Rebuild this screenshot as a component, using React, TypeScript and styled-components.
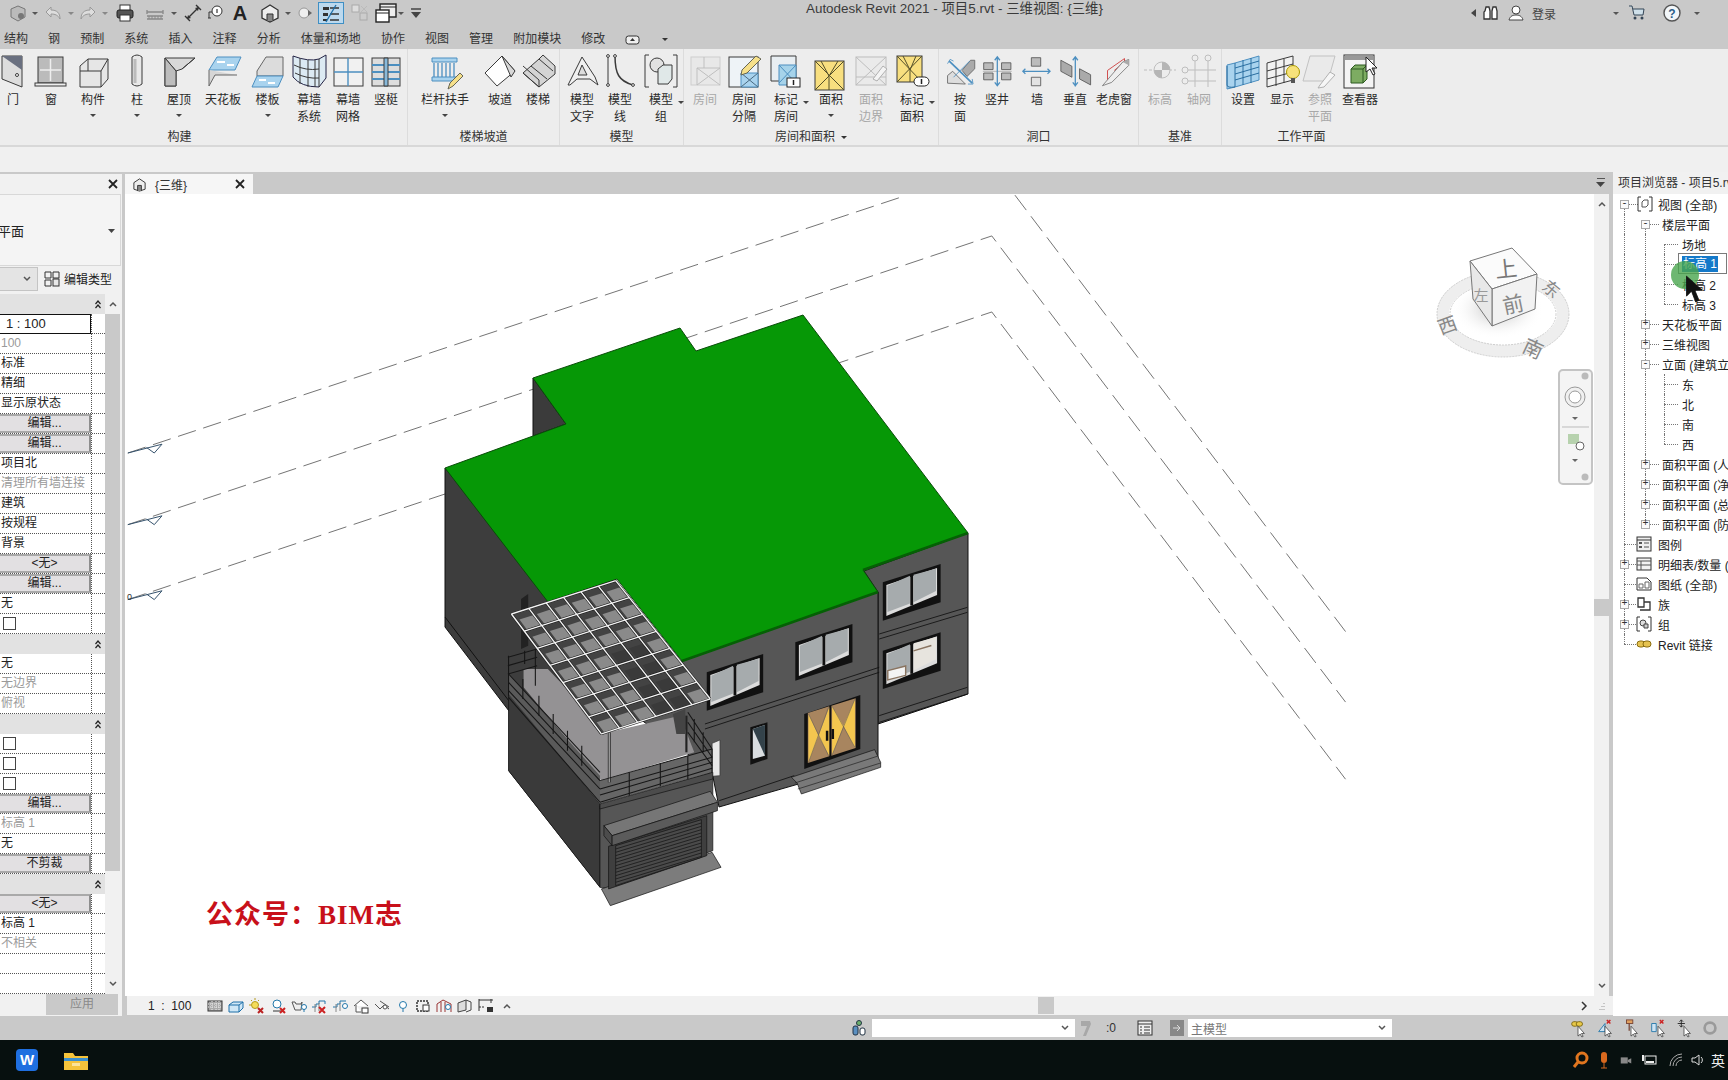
import React from "react";
import styled, { createGlobalStyle } from "styled-components";

const Global = createGlobalStyle`
  html, body { margin: 0; padding: 0; width: 1728px; height: 1080px; overflow: hidden; background: #c9c9c9; }
  * { box-sizing: border-box; }
  body { font-family: "Liberation Sans", "Noto Sans CJK SC", sans-serif; font-size: 12px; color: #222; }
`;

const Page = styled.div`width:1728px;height:1080px;display:flex;flex-direction:column;overflow:hidden;`;
const TitleBar = styled.div`height:28px;background:#c9c9c9;position:relative;display:flex;align-items:flex-start;padding-left:6px;`;
const TitleText = styled.div`position:absolute;left:806px;top:0;font-size:13.4px;line-height:18px;color:#3a3a3a;white-space:nowrap;`;
const Qat = styled.div`display:flex;align-items:center;height:26px;`;
const Slot = styled.div<{ $w: number; $on?: boolean }>`
  width:${p => p.$w}px;height:22px;display:flex;align-items:center;justify-content:center;
  ${p => p.$on ? "background:#bcd9ee;outline:1px solid #3f8fc4;outline-offset:-1px;" : ""}
`;
const TinyArrow = styled.span<{ $c?: string }>`width:0;height:0;border-left:3px solid transparent;border-right:3px solid transparent;border-top:3px solid ${p => p.$c || "#555"};display:inline-block;`;
const UserArea = styled.div`position:absolute;left:1470px;top:1px;height:24px;display:flex;align-items:center;`;
const LoginText = styled.span`font-size:12px;color:#444;width:82px;padding-left:4px;`;
const TabsBar = styled.div`height:21px;background:#c9c9c9;display:flex;align-items:center;gap:20.1px;padding:2px 0 0 4px;font-size:12px;color:#333;`;
const TabLabel = styled.span`white-space:nowrap;line-height:19px;`;
const Ribbon = styled.div`height:98px;background:#ededed;border-bottom:2px solid #d8d8d8;display:flex;`;
const Panel = styled.div<{ $w: number; $ml?: number; $last?: boolean }>`
  width:${p => p.$w}px;flex:none;margin-left:${p => p.$ml || 0}px;display:flex;flex-direction:column;
  ${p => p.$last ? "" : "border-right:1px solid #dcdcdc;"}
`;
const ToolRow = styled.div<{ $pl: number }>`height:80px;display:flex;padding-left:${p => p.$pl}px;`;
const Tool = styled.div<{ $w: number; $dim?: boolean }>`
  width:${p => p.$w}px;flex:none;display:flex;flex-direction:column;align-items:center;padding-top:4px;font-size:12px;line-height:17px;
  color:${p => p.$dim ? "#a8a8a8" : "#2a2a2a"};text-align:center;position:relative;
`;
const ToolIcon = styled.svg`width:36px;height:36px;flex:none;margin-bottom:3px;overflow:visible;`;
const ToolText = styled.div`white-space:pre-line;`;
const ToolArrow = styled.span`display:block;width:0;height:0;margin-top:5px;border-left:3px solid transparent;border-right:3px solid transparent;border-top:3px solid #444;`;
const SideArrow = styled(ToolArrow)`position:absolute;right:0;top:52px;margin:0;`;
const PanelTitle = styled.div`height:16px;line-height:16px;text-align:center;font-size:12px;color:#333;display:flex;align-items:center;justify-content:center;gap:6px;`;
const Band = styled.div`height:25px;background:#f0f0f0;`;

const Work = styled.div`flex:1;display:flex;background:#c9c9c9;min-height:0;`;
const Props = styled.div`width:122px;margin-top:2px;background:#f1f1f1;display:flex;flex-direction:column;flex:none;`;
const PropHead = styled.div`height:20px;display:flex;justify-content:flex-end;align-items:center;padding-right:3px;`;
const TypeBox = styled.div`height:72px;margin-right:1px;background:#f4f4f4;border-top:1px solid #d8d8d8;border-bottom:1px solid #d8d8d8;border-right:1px solid #d8d8d8;display:flex;align-items:center;justify-content:space-between;overflow:hidden;padding-right:4px;`;
const TypeName = styled.span`margin-left:-28px;font-size:13px;white-space:nowrap;`;
const ComboRow = styled.div`height:28px;display:flex;align-items:center;padding-bottom:3px;`;
const MiniCombo = styled.div`width:38px;height:24px;background:#e4e4e4;border:1px solid #c4c4c4;border-left:0;display:flex;align-items:center;justify-content:flex-end;padding-right:5px;`;
const EditType = styled.div`display:flex;align-items:center;gap:4px;margin-left:6px;font-size:12px;white-space:nowrap;`;
const TableWrap = styled.div`height:700px;display:flex;`;
const Table = styled.div`width:105px;background:#fff;flex:none;`;
const Row = styled.div<{ $head?: boolean }>`
  height:20px;display:grid;grid-template-columns:91px 14px;
  ${p => p.$head ? "background:#e2e2e2;" : "border-bottom:1px dotted #555;"}
`;
const Val = styled.div<{ $gray?: boolean }>`
  font-size:12px;line-height:19px;padding-left:1px;white-space:nowrap;overflow:hidden;color:${p => p.$gray ? "#9a9a9a" : "#222"};
`;
const InputVal = styled.div`height:20px;border:1px solid #111;background:#fff;border-left:0;font-size:13px;line-height:18px;padding-left:6px;color:#222;`;
const Btn = styled.div`height:19px;background:#e2e0e2;border:2px solid #a9a9a9;border-left:0;border-right-color:#8e8e8e;text-align:center;line-height:15px;font-size:12px;color:#222;`;
const Chk = styled.div`width:13px;height:13px;margin:3px 0 0 2px;border:1px solid #444;background:#fff;`;
const Tail = styled.div<{ $head?: boolean }>`${p => p.$head ? "" : "border-left:1px dotted #555;"}display:flex;align-items:center;justify-content:center;`;
const Scroll = styled.div`width:15px;margin-left:0;display:flex;flex-direction:column;background:#f1f1f1;flex:none;`;
const ScrollBtn = styled.div`height:20px;display:flex;align-items:center;justify-content:center;flex:none;`;
const ScrollThumb = styled.div<{ $h: number }>`height:${p => p.$h}px;background:#c9c9c9;flex:none;`;
const ScrollRest = styled.div`flex:1;`;
const ApplyRow = styled.div`flex:1;display:flex;justify-content:flex-end;padding:0 4px 0 0;`;
const ApplyBtn = styled.div`width:72px;height:21px;background:#c9c9c9;color:#8a8a8a;text-align:center;line-height:20px;font-size:12px;`;

const Center = styled.div`width:1488px;margin-left:3px;flex:none;display:flex;flex-direction:column;`;
const DocStrip = styled.div`height:22px;display:flex;justify-content:space-between;align-items:flex-end;padding-right:8px;`;
const DocTab = styled.div`width:128px;height:20px;background:#f6f6f6;display:flex;align-items:center;padding:0 7px;gap:8px;font-size:12px;color:#333;`;
const DocTitle = styled.span`flex:1;`;
const StripMenu = styled.div`height:22px;display:flex;flex-direction:column;justify-content:center;align-items:center;gap:1px;`;
const MenuBar = styled.span`width:8px;height:1px;background:#555;`;
const ViewRow = styled.div`height:802px;display:flex;`;
const Canvas = styled.div`width:1469px;flex:none;background:#fff;position:relative;overflow:hidden;`;
const Scene = styled.svg`display:block;width:1469px;height:802px;`;
const Watermark = styled.div`position:absolute;left:81px;top:705px;font-family:"Liberation Serif","Noto Sans CJK SC",serif;font-weight:700;font-size:27px;line-height:32px;color:#c8101a;letter-spacing:1px;white-space:nowrap;`;
const Cube = styled.svg`position:absolute;left:1295px;top:25px;width:180px;height:150px;`;
const NavBar = styled.div`position:absolute;left:1433px;top:175px;width:35px;height:116px;border:2px solid #c4c4c4;border-radius:5px;background:#f4f4f4;`;
const NavSvg = styled.svg`display:block;width:31px;height:112px;`;
const VScroll = styled.div`width:15px;background:#f1f1f1;display:flex;flex-direction:column;flex:none;`;
const VTrack = styled.div`flex:1;display:flex;flex-direction:column;align-items:stretch;padding-top:385px;`;
const VThumb = styled.div`height:17px;background:#c9c9c9;`;
const ViewBar = styled.div`height:19px;background:#f1f1f1;margin-left:2px;display:flex;align-items:center;position:relative;`;
const Scale = styled.div`width:78px;padding-left:21px;font-size:12px;color:#222;white-space:pre;flex:none;`;
const BarIcons = styled.div`display:flex;align-items:center;width:326px;flex:none;`;
const BarSlot = styled.div`width:20.8px;height:19px;display:flex;align-items:center;justify-content:center;flex:none;`;
const HThumb = styled.div`position:absolute;left:911px;top:1px;width:16px;height:17px;background:#c9c9c9;`;
const HRight = styled.div`position:absolute;left:1452px;top:0;height:19px;display:flex;align-items:center;gap:9px;`;

const Browser = styled.div`flex:1;background:#fff;display:flex;flex-direction:column;overflow:hidden;position:relative;`;
const BrowserHead = styled.div`height:22px;background:#f1f1f1;font-size:12px;line-height:22px;padding-left:5px;white-space:nowrap;overflow:hidden;color:#333;`;
const TreeRow = styled.div<{ $x: number }>`height:20px;position:relative;display:flex;align-items:center;padding-left:${p => p.$x}px;font-size:12px;white-space:nowrap;color:#222;flex:none;`;
const Guide = styled.span<{ $x: number; $half?: boolean; $low?: boolean }>`
  position:absolute;left:${p => p.$x}px;top:${p => p.$low ? "10px" : "0"};height:${p => p.$half || p.$low ? "10px" : "20px"};border-left:1px dotted #777;
`;
const Elbow = styled.span<{ $x: number; $w: number }>`position:absolute;left:${p => p.$x}px;top:10px;width:${p => p.$w}px;border-top:1px dotted #777;`;
const Expander = styled.span<{ $x: number }>`
  position:absolute;left:${p => p.$x - 4}px;top:6px;width:9px;height:9px;border:1px solid #aaa;background:#fafafa;
  font-size:10px;line-height:6px;text-align:center;color:#333;font-family:"Liberation Mono",monospace;z-index:1;
`;
const TreeIcon = styled.svg<{ $x: number }>`position:absolute;left:${p => p.$x}px;top:2px;width:16px;height:16px;z-index:1;`;
const EditBox = styled.div`position:absolute;left:65px;top:-1px;width:49px;height:21px;border:1px solid #7a7a7a;background:#fff;padding:2px 0 0 3px;z-index:2;`;
const EditSel = styled.span`display:inline-block;background:#1479c9;color:#fff;font-size:12px;line-height:16px;padding:0 1px;`;
const MouseDot = styled.div`position:absolute;left:58px;top:89px;width:28px;height:28px;border-radius:50%;background:rgba(72,165,78,.8);z-index:3;`;
const Pointer = styled.svg`position:absolute;left:71px;top:103px;width:20px;height:29px;z-index:4;`;
const RibbonCursor = styled.svg`position:absolute;left:1365px;top:56px;width:12px;height:20px;z-index:4;`;

const Status = styled.div`height:24px;background:#c9c9c9;position:relative;display:flex;align-items:center;padding-left:846px;flex:none;overflow:hidden;`;
const Field = styled.div<{ $w: number }>`width:${p => p.$w}px;height:18px;background:#fff;display:flex;align-items:center;justify-content:space-between;padding:0 5px 0 3px;font-size:12px;color:#777;flex:none;`;
const StatusSlot = styled.div<{ $w: number }>`width:${p => p.$w}px;height:20px;display:flex;align-items:center;justify-content:center;font-size:12px;color:#333;flex:none;`;
const SelectTools = styled.div`margin-left:173px;display:flex;align-items:center;flex:none;`;
const Taskbar = styled.div`height:40px;background:#07100f;display:flex;align-items:center;padding-left:16px;position:relative;flex:none;`;
const WpsIcon = styled.div`width:22px;height:22px;border-radius:4px;background:#1f6fe0;color:#fff;font-weight:700;font-size:15px;line-height:22px;text-align:center;`;
const Folder = styled.svg`width:26px;height:22px;margin-left:25px;`;
const Tray = styled.div`position:absolute;left:1570px;top:0;height:40px;display:flex;align-items:center;width:158px;overflow:hidden;`;
const TraySlot = styled.div<{ $w: number }>`width:${p => p.$w}px;flex:none;display:flex;justify-content:center;color:#eee;font-size:14px;`;
const SmallSvg = styled.svg<{ $s?: number }>`width:${p => p.$s || 18}px;height:${p => p.$s || 18}px;display:block;overflow:visible;flex:none;`;
const A = styled.span`font-size:20px;font-weight:700;color:#222;line-height:22px;`;

const k = "#3a3a3a";
const b1 = "#4c8fc0";
const b2 = "#a9d3ee";
const y1 = "#f6e08a";

const icons: Record<string, React.ReactNode> = {
  door: <><path d="M7 3h20v31L7 26z" fill="#ddd" stroke={k} /><path d="M7 3h20v14z" fill="#6a7080" /><circle cx="22" cy="22" r="1.5" fill="#fff" stroke={k} /></>,
  window: <><rect x="5" y="4" width="25" height="26" fill="#bbb" stroke={k} /><path d="M17.5 6v22M7 17h21" stroke="#eee" strokeWidth="1.5" /><rect x="2" y="30" width="31" height="3" fill="#eee" stroke={k} /></>,
  comp: <><path d="M5 13l8-7h20v20l-7 8H5z" fill="#e6e6e6" stroke={k} /><path d="M13 6v12H5M13 18l13 0v16M26 18l7-12" fill="none" stroke={k} /></>,
  column: <><path d="M13 4q5-4 10 0v27q-5 4-10 0z" fill="#e8e8e8" stroke={k} /><path d="M16 6v24" stroke="#bbb" strokeWidth="3" /></>,
  roof: <><path d="M4 5h30L21 16l-6 2v15H4z" fill="#d9d9d9" stroke={k} /><path d="M4 5l11 13M34 5L21 16" stroke={k} fill="none" /><path d="M4 5l11 13v15H4z" fill="#bdbdbd" stroke={k} /></>,
  ceil: <><path d="M12 4h24l-6 13H4z" fill={b2} stroke={b1} /><path d="M4 17v16l6-11h22" fill="#d6d6d6" stroke="#666" /><path d="M12 9h8M22 12h7" stroke="#fff" strokeWidth="2" /></>,
  floor: <><path d="M7 18l9-14h17v19H7z" fill="#dcdcdc" stroke="#666" /><path d="M7 23h26l-5 11H2z" fill={b2} stroke={b1} /><path d="M9 27h7M18 30h7" stroke="#fff" strokeWidth="2" /></>,
  curtain: <><path d="M2 3q16 6 26 3l7-4v23l-7 9q-18 0-26-10z" fill="#dceaf3" stroke="#224" /><path d="M9 5v26M17 7v27M24 7v27M3 12q12 6 25 4M4 20q12 6 24 5M28 6v28" stroke={k} fill="none" /></>,
  cgrid: <><rect x="4" y="5" width="29" height="28" fill="#f1f1f1" stroke={k} /><path d="M18 5v28M4 19h29" stroke={b1} strokeWidth="1.4" /></>,
  mullion: <><rect x="4" y="5" width="28" height="28" fill="#ddd" stroke={k} /><path d="M4 12h28M4 19h28M4 26h28" stroke={b1} strokeWidth="2" /><path d="M16 5h4v28h-4z" fill="#88b9da" stroke={k} /></>,
  railing: <><path d="M5 5h25v4H5z" fill={b2} stroke={b1} /><path d="M7 10v14M11 10v14M15 10v14M19 10v14M23 10v14M27 10v14" stroke={b1} strokeWidth="1.3" /><path d="M5 24h25v4H5z" fill={b2} stroke={b1} /><path d="M21 36l2-6 10-10 3 3-10 10z" fill={y1} stroke="#665" /></>,
  ramp: <><path d="M3 20L20 3l13 15-18 15z" fill="#fff" stroke={k} /><path d="M20 3l13 15-4 6z" fill="#d8d8d8" stroke={k} /></>,
  stair: <><path d="M3 20l8-7 8-7 4-4 12 11v8L19 34z" fill="#d4d4d4" stroke={k} /><path d="M3 20l16 14v-7L3 13M11 13l16 13M19 6l14 12" stroke={k} fill="none" /></>,
  mtext: <><path d="M4 32L18 4l13 20 3 8-8-6H13l-7 6z" fill="#f0f0f0" stroke={k} /><path d="M14 22l4-10 5 10z" fill="#ddd" stroke={k} /></>,
  mline: <><path d="M6 4v28" stroke={k} strokeWidth="1" /><path d="M13 3c0 18 4 25 18 29" stroke={k} strokeWidth="1.5" fill="none" /><circle cx="6" cy="3" r="1.4" fill="#fff" stroke={k} /><circle cx="6" cy="32" r="1.4" fill="#fff" stroke={k} /><circle cx="31" cy="32" r="1.4" fill="#fff" stroke={k} /><circle cx="13" cy="3" r="1.4" fill="#fff" stroke={k} /></>,
  mgroup: <><path d="M6 2H2v32h4M30 2h4v32h-4" stroke={k} fill="none" /><circle cx="14" cy="12" r="7" fill="#e2e2e2" stroke={k} /><path d="M15 16l5-4h9v14l-4 5H15z" fill="#e0e8e8" stroke={k} /></>,
  room0: <g opacity=".45"><rect x="4" y="4" width="29" height="28" fill="#e4e4e4" stroke="#aaa" /><path d="M10 15l23 17M33 15L10 32M10 15v17M10 15h23M17 4v11" stroke="#888" fill="none" /></g>,
  roomsep: <><rect x="3" y="4" width="29" height="30" fill="#eef3f7" stroke={k} /><path d="M15 20h17v14H15z" fill={b2} stroke={b1} /><path d="M15 20l17 14M32 20L15 34" stroke="#4a6a80" /><path d="M16 17L30 3l5 3-14 14-6 2z" fill={y1} stroke="#665" /></>,
  roomtag: <><path d="M3 3h25v25H3z" fill="#e8eef2" stroke={k} /><path d="M11 12h17v20H11z" fill="#a6d3ea" stroke={b1} /><path d="M11 12l17 18M28 12L11 30" stroke={b1} /><rect x="19" y="25" width="13" height="9" fill="#fff" stroke="#222" /><path d="M25.5 27v5" stroke="#222" strokeWidth="1.5" /></>,
  area: <><rect x="2" y="8" width="29" height="29" fill="#f8df7f" stroke={k} /><path d="M2 8l29 29M31 8L2 37M8 8l8 15 9-15M16 23v14" stroke="#54502a" fill="none" /></>,
  areab: <g opacity=".4"><rect x="3" y="4" width="30" height="28" fill="#e8e8e8" stroke="#777" /><path d="M3 4l30 28M33 4L3 32M3 24h30" stroke="#777" /><path d="M20 26l10-13 4 3-10 12z" fill="#fff" stroke="#555" /></g>,
  areatag: <><rect x="3" y="3" width="25" height="26" fill="#f8df7f" stroke={k} /><path d="M3 3l25 26M28 3L3 29M9 3l7 14 6-14M16 17v12" stroke="#54502a" fill="none" /><rect x="20" y="24" width="15" height="9" rx="4.5" fill="#fff" stroke="#222" /><path d="M27.5 26v5" stroke="#222" strokeWidth="1.5" /></>,
  byface: <g transform="translate(3 3) scale(.85)"><path d="M3 32V23l6-5 15 15z" fill="#ddd" stroke="#666" /><path d="M20 17l10-12 5 0v10l-9 9z" fill="#aaa" stroke="#666" /><path d="M5 6l27 26" stroke={b1} strokeWidth="2" /><path d="M3 9l3-5 4 2M27 33l6 0-1-6M10 25l19-19" stroke={b1} fill="none" /></g>,
  shaft: <g transform="translate(3 3) scale(.85)"><path d="M2 8h11v8H2zM23 8h11v8H23zM2 20h11v8H2zM23 20h11v8H23z" fill="#bbb" stroke="#555" /><path d="M1 18h34" stroke="#aaa" /><path d="M18 2v32M15 5l3-4 3 4M15 31l3 4 3-4" stroke={b1} strokeWidth="1.5" fill="none" /></g>,
  wallop: <g transform="translate(3 3) scale(.85)"><path d="M11 2h11v10H11z" fill="#bbb" stroke="#555" /><path d="M11 25h11v10H11z" fill="#e2e2e2" stroke="#555" /><path d="M1 18h32M4 15l-3 3 3 3M30 15l3 3-3 3" stroke={b1} strokeWidth="1.5" fill="none" /></g>,
  vert: <g transform="translate(3 3) scale(.85)"><path d="M1 5l13 7v13L1 18zM23 15l13 7v12l-13-7z" fill="#aaa" stroke="#555" /><path d="M18 1v35M15 5l3-4 3 4M15 31l3 4 3-4" stroke={b1} strokeWidth="1.5" fill="none" /></g>,
  dormer: <g transform="translate(3 3) scale(.85)"><path d="M10 32V17L30 3v4L18 17" fill="none" stroke="#c33" /><path d="M4 35l24-28 7-3v7L15 31z" fill="#eee" stroke="#777" /><path d="M28 7l7-3v7z" fill="#aaa" /></g>,
  level: <g opacity=".55"><path d="M2 17h32" stroke="#999" strokeDasharray="3 2" /><circle cx="20" cy="17" r="8" fill="#eee" stroke="#999" /><path d="M20 9a8 8 0 0 1 8 8h-8zM20 25a8 8 0 0 1-8-8h8z" fill="#888" /></g>,
  grid: <g opacity=".55" fill="none" stroke="#999"><circle cx="14" cy="5" r="3" /><circle cx="27" cy="5" r="3" /><circle cx="4" cy="17" r="3" /><circle cx="4" cy="28" r="3" /><path d="M14 8v26M27 8v26M7 17h28M7 28h28" /></g>,
  set: <><path d="M2 12l8-2 24-7v24l-24 7-8 2z" fill={b2} stroke={b1} /><path d="M2 13v19q0 3 8 2V10M18 7v25M26 5v25M10 15l24-7M10 21l24-7M10 27l24-7" stroke="#2a6ea0" fill="none" /></>,
  show: <><path d="M3 10l26-7v24L3 34z" fill="#f2f2f2" stroke={k} /><path d="M12 8v25M20 6v24M3 18l26-7M3 26l26-7" stroke={k} /><circle cx="29" cy="19" r="6.5" fill="#f7e27b" stroke="#a90" /><rect x="27" y="25" width="4" height="5" fill="#555" /></>,
  refp: <g opacity=".5"><path d="M8 3h25l-7 25H1z" fill="#e8e8e8" stroke="#999" /><path d="M18 32l10-13 5 3-11 12-6 1z" fill="#fff" stroke="#777" /></g>,
  viewer: <><rect x="2" y="2" width="30" height="33" fill="#f4f4f4" stroke="#333" /><rect x="3" y="3" width="28" height="4" fill="#999" /><path d="M9 16l4-4h12v14l-4 4H9z" fill="#7dac62" stroke="#2d5a20" /><path d="M9 16h12v14M21 16l4-4" stroke="#2d5a20" fill="none" /></>,
};

type T = { i: string; t: string; w: number; dim?: boolean; arrow?: boolean; side?: boolean };
const panels: { w: number; ml?: number; pl: number; title: string; more?: boolean; last?: boolean; tools: T[] }[] = [
  { w: 456, ml: -48, pl: 42, title: "构建", tools: [
    { i: "door", t: "门", w: 38 }, { i: "window", t: "窗", w: 38 }, { i: "comp", t: "构件", w: 46, arrow: true }, { i: "column", t: "柱", w: 42, arrow: true },
    { i: "roof", t: "屋顶", w: 42, arrow: true }, { i: "ceil", t: "天花板", w: 46 }, { i: "floor", t: "楼板", w: 43, arrow: true },
    { i: "curtain", t: "幕墙\n系统", w: 40 }, { i: "cgrid", t: "幕墙\n网格", w: 38 }, { i: "mullion", t: "竖梃", w: 38 } ] },
  { w: 152, pl: 2, title: "楼梯坡道", tools: [ { i: "railing", t: "栏杆扶手", w: 70, arrow: true }, { i: "ramp", t: "坡道", w: 40 }, { i: "stair", t: "楼梯", w: 36 } ] },
  { w: 124, pl: 2, title: "模型", tools: [ { i: "mtext", t: "模型\n文字", w: 40 }, { i: "mline", t: "模型\n线", w: 36 }, { i: "mgroup", t: "模型\n组", w: 46, side: true } ] },
  { w: 255, pl: 1, title: "房间和面积", more: true, tools: [
    { i: "room0", t: "房间", w: 40, dim: true }, { i: "roomsep", t: "房间\n分隔", w: 38 }, { i: "roomtag", t: "标记\n房间", w: 46, side: true },
    { i: "area", t: "面积", w: 44, arrow: true }, { i: "areab", t: "面积\n边界", w: 36, dim: true }, { i: "areatag", t: "标记\n面积", w: 46, side: true } ] },
  { w: 200, pl: 2, title: "洞口", tools: [ { i: "byface", t: "按\n面", w: 38 }, { i: "shaft", t: "竖井", w: 36 }, { i: "wallop", t: "墙", w: 44 }, { i: "vert", t: "垂直", w: 32 }, { i: "dormer", t: "老虎窗", w: 46 } ] },
  { w: 83, pl: 1, title: "基准", tools: [ { i: "level", t: "标高", w: 40, dim: true }, { i: "grid", t: "轴网", w: 38, dim: true } ] },
  { w: 159, pl: 1, title: "工作平面", last: true, tools: [ { i: "set", t: "设置", w: 40 }, { i: "show", t: "显示", w: 38 }, { i: "refp", t: "参照\n平面", w: 38, dim: true }, { i: "viewer", t: "查看器", w: 42 } ] },
];

const tabs = ["结构", "钢", "预制", "系统", "插入", "注释", "分析", "体量和场地", "协作", "视图", "管理", "附加模块", "修改"];

const Chev = ({ up = true }: { up?: boolean }) => (
  <SmallSvg $s={10} viewBox="0 0 10 10"><path d={up ? "M2 7l3-3 3 3" : "M2 3l3 3 3-3"} fill="none" stroke="#555" strokeWidth="1.5" /></SmallSvg>
);
const Dbl = () => (
  <SmallSvg $s={10} viewBox="0 0 10 10"><path d="M2.5 5l2.5-3 2.5 3M2.5 9l2.5-3 2.5 3" fill="none" stroke="#222" strokeWidth="1.2" /></SmallSvg>
);

type P = { kind: string; t?: string };
const propRows: P[] = [
  { kind: "head" }, { kind: "input", t: "1 : 100" }, { kind: "gray", t: "100" }, { kind: "text", t: "标准" }, { kind: "text", t: "精细" }, { kind: "text", t: "显示原状态" },
  { kind: "btn", t: "编辑..." }, { kind: "btn", t: "编辑..." }, { kind: "text", t: "项目北" }, { kind: "gray", t: "清理所有墙连接" }, { kind: "text", t: "建筑" }, { kind: "text", t: "按规程" },
  { kind: "text", t: "背景" }, { kind: "btn", t: "<无>" }, { kind: "btn", t: "编辑..." }, { kind: "text", t: "无" }, { kind: "check" }, { kind: "head" },
  { kind: "text", t: "无" }, { kind: "gray", t: "无边界" }, { kind: "gray", t: "俯视" }, { kind: "head" }, { kind: "check" }, { kind: "check" }, { kind: "check" },
  { kind: "btn", t: "编辑..." }, { kind: "gray", t: "标高 1" }, { kind: "text", t: "无" }, { kind: "btn", t: "不剪裁" }, { kind: "head" },
  { kind: "btn", t: "<无>" }, { kind: "text", t: "标高 1" }, { kind: "gray", t: "不相关" }, { kind: "empty" }, { kind: "empty" },
];

const L0 = 11, L1 = 32, L2 = 51;
type TN = { t: string; x: number; exp?: "+" | "-"; ex?: number; ic?: string; ix?: number; g?: number[]; half?: number[]; low?: number[]; el?: [number, number]; edit?: boolean };
const tree: TN[] = [
  { t: "视图 (全部)", x: 45, exp: "-", ex: L0, ic: "view", ix: 24, low: [L0], el: [L0, 14] },
  { t: "楼层平面", x: 49, exp: "-", ex: L1, g: [L0], low: [L1], el: [L1, 14] },
  { t: "场地", x: 69, g: [L0, L1], low: [L2], el: [L2, 14] },
  { t: "", x: 69, g: [L0, L1, L2], el: [L2, 14], edit: true },
  { t: "标高 2", x: 69, g: [L0, L1, L2], el: [L2, 14] },
  { t: "标高 3", x: 69, g: [L0, L1], half: [L2], el: [L2, 14] },
  { t: "天花板平面", x: 49, exp: "+", ex: L1, g: [L0, L1], el: [L1, 14] },
  { t: "三维视图", x: 49, exp: "+", ex: L1, g: [L0, L1], el: [L1, 14] },
  { t: "立面 (建筑立面)", x: 49, exp: "-", ex: L1, g: [L0, L1], el: [L1, 14] },
  { t: "东", x: 69, g: [L0, L1, L2], el: [L2, 14] },
  { t: "北", x: 69, g: [L0, L1, L2], el: [L2, 14] },
  { t: "南", x: 69, g: [L0, L1, L2], el: [L2, 14] },
  { t: "西", x: 69, g: [L0, L1], half: [L2], el: [L2, 14] },
  { t: "面积平面 (人防分区面积)", x: 49, exp: "+", ex: L1, g: [L0, L1], el: [L1, 14] },
  { t: "面积平面 (净面积)", x: 49, exp: "+", ex: L1, g: [L0, L1], el: [L1, 14] },
  { t: "面积平面 (总建筑面积)", x: 49, exp: "+", ex: L1, g: [L0, L1], el: [L1, 14] },
  { t: "面积平面 (防火分区面积)", x: 49, exp: "+", ex: L1, g: [L0], half: [L1], el: [L1, 14] },
  { t: "图例", x: 45, ic: "legend", ix: 23, g: [L0], el: [L0, 12] },
  { t: "明细表/数量 (全部)", x: 45, exp: "+", ex: L0, ic: "sched", ix: 23, g: [L0], el: [L0, 12] },
  { t: "图纸 (全部)", x: 45, ic: "sheet", ix: 23, g: [L0], el: [L0, 12] },
  { t: "族", x: 45, exp: "+", ex: L0, ic: "fam", ix: 23, g: [L0], el: [L0, 12] },
  { t: "组", x: 45, exp: "+", ex: L0, ic: "grp", ix: 23, g: [L0], el: [L0, 12] },
  { t: "Revit 链接", x: 45, ic: "link", ix: 23, half: [L0], el: [L0, 12] },
];
const treeIcons: Record<string, React.ReactNode> = {
  view: <><path d="M4 1H1v14h3M12 1h3v14h-3" fill="none" stroke="#333" /><path d="M5 6l2-2h4v5l-2 2H5z" fill="#fff" stroke="#555" /></>,
  legend: <><rect x="1" y="1" width="14" height="14" fill="#eee" stroke="#333" /><path d="M1 4h14" stroke="#333" /><path d="M3 6h3v2H3zM3 10h3v2H3z" fill="#555" /><path d="M8 7h5M8 11h5" stroke="#555" /></>,
  sched: <><rect x="1" y="2" width="14" height="12" fill="#f2f2f2" stroke="#333" /><path d="M1 5h14M1 9h14M5 5v9" stroke="#555" /></>,
  sheet: <><path d="M1 2h10l4 4v8H1z" fill="#fff" stroke="#333" /><path d="M3 8h4v4H3zM9 6h4v6H9z" fill="none" stroke="#666" /></>,
  fam: <><path d="M2 2h6v9H2zM8 6h6v8H4" fill="none" stroke="#333" strokeWidth="1.3" /></>,
  grp: <><path d="M4 1H1v14h3M12 1h3v14h-3" fill="none" stroke="#333" /><circle cx="7" cy="7" r="3" fill="#ddd" stroke="#444" /><path d="M8 8h4v4H8z" fill="#ccc" stroke="#444" /></>,
  link: <><rect x="1" y="5" width="8" height="6" rx="3" fill="#e6c350" stroke="#8a6d10" /><rect x="7" y="5" width="8" height="6" rx="3" fill="#e6c350" stroke="#8a6d10" /></>,
};

const lerp = (a: number[], b: number[], t: number) => [a[0] + (b[0] - a[0]) * t, a[1] + (b[1] - a[1]) * t];
const Lattice = () => {
  const p = [[228, 165], [520, 65], [785, 420], [480, 525]];
  const n = 6, m = 7;
  const at = (i: number, j: number) => lerp(lerp(p[0], p[1], i / n), lerp(p[3], p[2], i / n), j / m);
  const cells: React.ReactNode[] = [];
  for (let i = 0; i < n; i++) for (let j = 0; j < m; j++) {
    const a = at(i, j), c = at(i + 1, j), d = at(i + 1, j + 1), e = at(i, j + 1);
    cells.push(<polygon key={`d${i}${j}`} points={[a, c, d, e].map(q => q.join(",")).join(" ")} fill="#434343" />);
    const ae = lerp(a, e, .38), cd = lerp(c, d, .38);
    const inner = [lerp(ae, cd, .18), cd, d, lerp(e, d, .18)].map(q => `${q[0]},${q[1]}`).join(" ");
    cells.push(<polygon key={`l${i}${j}`} points={inner} fill={j > 2 && j < 7 && i > 2 && i < 5 ? "#3a3a3a" : "#8a8a8a"} />);
  }
  const lines: number[][][] = [];
  for (let i = 0; i <= n; i++) lines.push([at(i, 0), at(i, m)]);
  for (let j = 0; j <= m; j++) lines.push([at(0, j), at(n, j)]);
  return (
    <g>
      {cells}
      {lines.map((l, i) => <line key={`a${i}`} x1={l[0][0]} y1={l[0][1]} x2={l[1][0]} y2={l[1][1]} stroke="#111" strokeWidth="7" />)}
      {lines.map((l, i) => <line key={`b${i}`} x1={l[0][0]} y1={l[0][1]} x2={l[1][0]} y2={l[1][1]} stroke="#f3f3f3" strokeWidth="4" />)}
    </g>
  );
};

const Win = ({ x1, y1, x2, y2, h, inner }: { x1: number; y1: number; x2: number; y2: number; h: number; inner?: boolean }) => {
  const mx = (x1 + x2) / 2, my = (y1 + y2) / 2;
  return (
    <g>
      <polygon points={`${x1},${y1} ${x2},${y2} ${x2},${y2 + h} ${x1},${y1 + h}`} fill="#111" />
      <polygon points={`${x1 + 10},${y1 + 8} ${x2 - 10},${y2 + 12} ${x2 - 10},${y2 + h - 22} ${x1 + 10},${y1 + h - 14}`} fill="#dcdcdc" />
      <polygon points={`${x1 + 13},${y1 + 10} ${mx - 5},${my + 8} ${mx - 5},${my + h - 24} ${x1 + 13},${y1 + h - 26}`} fill="#a6abad" />
      <polygon points={`${mx + 5},${my + 5} ${x2 - 13},${y2 + 14} ${x2 - 13},${y2 + h - 34} ${mx + 5},${my + h - 28}`} fill={inner ? "#e7e4de" : "#a6abad"} />
      <line x1={mx} y1={my + 3} x2={mx} y2={my + h - 18} stroke="#111" strokeWidth="8" />
      {inner && <path d={`M${mx + 5} ${my + 28}l50 -16M${x1 + 14} ${y1 + 60}l50 -14 0 28 -50 14z`} stroke="#8a7460" strokeWidth="4" fill="#f3f3f3" />}
    </g>
  );
};

const Building = () => (
  <g>
    <g transform="scale(1.102)" fill="none" stroke="#3c3c3c" strokeWidth=".65" strokeDasharray="17 7">
      <path d="M116 412L817 180" />
      <path d="M116 477L900 215L1221 638" />
      <path d="M116 545L900 284L1221 708" />
      <path d="M921 178L1221 574" />
    </g>
    <g transform="scale(1.102)" fill="none" stroke="#33506a" strokeWidth=".9">
      <path d="M116 412l31-8-7 8-7-5M116 477l31-8-7 8-7-5M116 545l31-8-7 8-7-5" />
    </g>
    <text x="127" y="601" fontSize="9" fill="#333" fontFamily="Liberation Sans">0</text>

    <polygon points="533,379 566,425 533,437" fill="#3b3b3b" stroke="#111" />
    <polygon points="445,469 570,610 600,807 600,888 509,772 509,712 445,628" fill="#3d3d3d" stroke="#111" />
    <path d="M445 618L509 702" stroke="#111" fill="none" />

    <polygon points="864,572 968,534 968,695 878,725 878,593" fill="#565656" stroke="#111" />
    <polygon points="682,662 878,593 878,762 719,808 712,773 640,720" fill="#565656" stroke="#111" />

    <polygon points="533,379 680,329 696,352 803,316 968,534 863,571 878,593 682,662 617,580 548,603 445,469 566,425" fill="#069806" stroke="#0a4d0a" />
    <path d="M682 662L878 593M968 534L863 571" stroke="#056005" strokeWidth="2.5" fill="none" />

    <g transform="translate(430 560) scale(.3571 .3333)">
      <polygon points="220,400 476,735 476,985 220,635" fill="#3a3a3a" stroke="#111" strokeWidth="2" />
      <polygon points="262,330 330,330 500,520 700,470 740,580 480,665 262,385" fill="#949294" />
      <polygon points="476,665 790,570 790,640 476,735" fill="#666" />
      <polygon points="220,345 476,650 476,735 220,405" fill="#5a5a5a" />
      <polygon points="255,120 275,105 275,260 255,270" fill="#222" />
      <line x1="502" y1="520" x2="502" y2="670" stroke="#222" strokeWidth="8" />
      <line x1="502" y1="520" x2="502" y2="670" stroke="#999" strokeWidth="4" />
      <line x1="718" y1="470" x2="718" y2="580" stroke="#222" strokeWidth="6" />
      <polygon points="680,465 715,450 715,525 690,525" fill="#444" />

      <polygon points="476,740 792,640 792,875 500,990 476,985" fill="#565656" stroke="#111" strokeWidth="2" />
      <polygon points="480,990 790,880 815,925 505,1040" fill="#7c7c7c" stroke="#111" strokeWidth="2" />
      <polygon points="500,862 775,770 775,890 500,990" fill="#3f3f3f" stroke="#111" strokeWidth="2" />
      <polygon points="520,860 760,782 760,895 520,980" fill="#4a4a4a" stroke="#111" strokeWidth="2" />
      <g stroke="#1c1c1c" strokeWidth="2.5">
        {Array.from({ length: 11 }).map((_, i) => <line key={i} x1="520" y1={870 + i * 10} x2="760" y2={792 + i * 10} />)}
      </g>
      <polygon points="487,800 785,697 805,730 510,830" fill="#767676" stroke="#111" strokeWidth="2" />
      <polygon points="487,800 510,830 510,860 487,830" fill="#4c4c4c" stroke="#111" strokeWidth="2" />
      <polygon points="510,830 805,730 805,755 510,860" fill="#5b5b5b" stroke="#111" strokeWidth="2" />

      <path d="M770 495L1258 325M770 510L1258 340M810 725L1020 650M1258 225L1505 145M1258 240L1505 160M1258 490L1505 405M1258 470L1505 385" stroke="#111" strokeWidth="2.5" fill="none" />
      <Win x1={775} y1={340} x2={933} y2={285} h={115} />
      <Win x1={1023} y1={250} x2={1183} y2={195} h={115} />
      <Win x1={1268} y1={70} x2={1430} y2={15} h={115} />
      <Win x1={1268} y1={275} x2={1430} y2={220} h={115} inner />

      <polygon points="897,505 945,490 945,600 897,617" fill="#111" />
      <polygon points="904,510 938,498 938,590 904,600" fill="#d9dde0" />
      <polygon points="904,510 938,498 938,590" fill="#33424a" />
      <polygon points="790,553 812,543 812,650 790,652" fill="#e8e8e8" stroke="#333" strokeWidth="2" />

      <polygon points="1048,465 1205,408 1205,570 1048,630" fill="#111" />
      <polygon points="1058,462 1118,442 1118,592 1058,612" fill="#a8855f" />
      <polygon points="1124,440 1192,418 1192,567 1124,590" fill="#a8855f" />
      <path d="M1060 465L1088 530 1060 610zM1118 445L1088 530 1118 590z" fill="#f3c64f" />
      <path d="M1126 442L1158 500 1126 588zM1190 420L1158 500 1190 566z" fill="#f3c64f" />
      <path d="M1060 465L1116 590M1116 445L1060 610M1126 442L1190 565M1190 420L1126 588" stroke="#555" strokeWidth="1.5" />
      <path d="M1112 515v30M1128 510v30" stroke="#111" strokeWidth="7" />

      <polygon points="1012,655 1245,572 1262,610 1262,625 1040,705 1028,672" fill="#797979" stroke="#111" strokeWidth="2" />
      <path d="M1022 672L1252 592M1030 690L1262 612" stroke="#222" strokeWidth="2" />

      <g stroke="#161616" strokeWidth="3" fill="none">
        <path d="M476 665L790 570M476 690L790 595M476 708L790 610M476 730L790 628" />
        <path d="M558 640v70M645 612v70M722 590v70M790 570v70" />
        <path d="M220 370L476 665M220 395L476 690M220 345L476 640M220 415L476 730" />
        <path d="M260 420v-60M305 470v-60M345 525v-60M385 575v-60M425 620v-60M220 290v120M265 275v40M295 270v110" />
        <path d="M218 295L300 270M218 320L300 295M218 345L300 320" />
        <path d="M722 460L790 570M722 490L790 595M722 520L790 620M740 480v70M765 520v60" />
      </g>
      <polygon points="476,735 792,640 792,660 476,750" fill="#4c4c4c" stroke="#111" strokeWidth="2" />

      <Lattice />
    </g>
  </g>
);

const ThinIcon = ({ n }: { n: number }) => {
  const shapes: React.ReactNode[] = [
    <><rect x="1" y="3" width="14" height="10" fill="#aaa" stroke="#333" /><path d="M1 6h14M1 9h14M5 3v10M9 3v10M12 3v10" stroke="#eee" strokeDasharray="1 1" /></>,
    <><path d="M1 7l4-3h10v6l-4 4H1z" fill="#cfe7f6" stroke="#1c6ea8" /><path d="M1 7h10v7M11 7l4-3" stroke="#1c6ea8" fill="none" /></>,
    <><circle cx="6" cy="7" r="3.5" fill="#f5dc5a" stroke="#b49a20" /><path d="M6 0v2M0 7h2M2 2l1 1M10 2l-1 1" stroke="#b49a20" /><path d="M9 10l5 5M14 10l-5 5" stroke="#b22" strokeWidth="2" /></>,
    <><circle cx="7" cy="6" r="4" fill="#fff" stroke="#27a" /><path d="M3 13h8" stroke="#333" /><path d="M10 10l5 5M15 10l-5 5" stroke="#c22" strokeWidth="2" /></>,
    <><path d="M1 4h3l1 2h5l1-2-1 8H4z" fill="#eee" stroke="#555" /><circle cx="13" cy="9" r="2.5" fill="#fff" stroke="#27a" /><path d="M13 11v3" stroke="#27a" /></>,
    <><path d="M1 9h4V6h3V3h6v3" fill="none" stroke="#27a" /><path d="M4 6v8M8 5v8" stroke="#888" /><path d="M8 9l6 6M14 9l-6 6" stroke="#c22" strokeWidth="2" /></>,
    <><path d="M1 9h4V6h3V3h6" fill="none" stroke="#27a" /><path d="M4 6v8M8 5v8" stroke="#888" /><circle cx="13" cy="8" r="2.5" fill="#fff" stroke="#27a" /></>,
    <><path d="M1 8l7-6 7 6M3 7v7h5" fill="#fff" stroke="#555" /><rect x="9" y="10" width="6" height="5" fill="#fff" stroke="#333" /></>,
    <><path d="M1 6l5 5 4-4 5 4M6 3l9 6" fill="none" stroke="#555" /><circle cx="11" cy="9" r="2" fill="#fff" stroke="#555" /></>,
    <><circle cx="8" cy="7" r="3.5" fill="#fff" stroke="#27a" /><path d="M8 11v3" stroke="#27a" /></>,
    <><rect x="2" y="3" width="11" height="10" fill="none" stroke="#333" strokeDasharray="2 1" strokeWidth="1.5" /><rect x="8" y="7" width="6" height="6" fill="#fff" stroke="#333" /></>,
    <><path d="M1 14V6l6-4 8 4v8M5 4v10M9 4v10" fill="none" stroke="#933" /><circle cx="12" cy="9" r="2.5" fill="#fff" stroke="#27a" /></>,
    <><path d="M1 5l8-3v10l-8 2z" fill="#ddd" stroke="#444" /><path d="M9 2l5 2v8l-5 2" fill="none" stroke="#444" /></>,
    <><path d="M1 2h14M1 1v12M13 1v4" stroke="#333" /><path d="M1 9h6" stroke="#333" strokeDasharray="2 1" /><rect x="9" y="9" width="6" height="5" fill="#333" /></>,
  ];
  return <SmallSvg $s={16} viewBox="0 0 16 16">{shapes[n]}</SmallSvg>;
};

const arrowPt = <path d="M9 8v11l2.5-2.2 1.8 3.2 1.4-.7-1.8-3.2h3.2z" fill="#fff" stroke="#333" strokeWidth=".8" />;
const selectIcons: React.ReactNode[] = [
  <><rect x="2" y="3" width="7" height="5" rx="2.5" fill="#e8c94a" stroke="#7a6410" /><rect x="7" y="3" width="7" height="5" rx="2.5" fill="#e8c94a" stroke="#7a6410" />{arrowPt}</>,
  <><path d="M2 14l7-9v9z" fill="#cfe3f2" stroke="#27a" /><path d="M11 1l4 4M15 1l-4 4" stroke="#c22" strokeWidth="1.6" />{arrowPt}</>,
  <><rect x="4" y="1" width="7" height="4" fill="#e0a060" stroke="#743" /><path d="M7 5v8" stroke="#743" strokeWidth="1.4" />{arrowPt}</>,
  <><path d="M2 5h5v9H2z" fill="#cfe3f2" stroke="#27a" /><path d="M11 1l4 4M15 1l-4 4" stroke="#c22" strokeWidth="1.6" />{arrowPt}</>,
  <><path d="M6 1v8M2 5h8M4 3l2-2 2 2M4 7l2 2 2-2" stroke="#222" fill="none" />{arrowPt}</>,
  <circle cx="9" cy="10" r="6" fill="none" stroke="#9a9a9a" strokeWidth="3" />,
  <path d="M4 2h8v6l-4 4-4-4z" fill="none" stroke="#555" />,
];

export default function App() {
  const qat: [number, React.ReactNode, boolean?][] = [
    [24, <SmallSvg $s={20} viewBox="0 0 20 20"><path d="M3 6l7-3 7 3v8l-7 4-7-4z" fill="#bbb" stroke="#777" /><circle cx="13" cy="13" r="3" fill="#777" /></SmallSvg>],
    [10, <TinyArrow />],
    [26, <SmallSvg $s={18} viewBox="0 0 18 18"><path d="M7 3L2 8l5 5V10c4 0 7 1 9 5 0-6-3-9-9-9z" fill="#ddd" stroke="#999" /></SmallSvg>],
    [10, <TinyArrow $c="#888" />],
    [24, <SmallSvg $s={18} viewBox="0 0 18 18"><path d="M11 3l5 5-5 5V10c-4 0-7 1-9 5 0-6 3-9 9-9z" fill="#ddd" stroke="#999" /></SmallSvg>],
    [10, <TinyArrow $c="#888" />],
    [30, <SmallSvg $s={20} viewBox="0 0 20 20"><rect x="5" y="2" width="10" height="6" fill="#fff" stroke="#333" /><rect x="2" y="7" width="16" height="8" rx="2" fill="#555" stroke="#222" /><rect x="5" y="12" width="10" height="6" fill="#fff" stroke="#333" /></SmallSvg>],
    [30, <SmallSvg $s={20} viewBox="0 0 20 20"><path d="M2 7v4M18 7v4M2 9h16M2 13h16M2 16h16" stroke="#888" strokeWidth="1.3" /><path d="M4 13v3M7 13v3M10 13v3M13 13v3M16 13v3" stroke="#888" /></SmallSvg>],
    [8, <TinyArrow />],
    [30, <SmallSvg $s={20} viewBox="0 0 20 20"><path d="M4 16L16 4M2 13l5 5M13 2l5 5" stroke="#333" strokeWidth="1.4" /><path d="M4 16l1-4 3 3zM16 4l-1 4-3-3z" fill="#333" /></SmallSvg>],
    [16, <SmallSvg $s={18} viewBox="0 0 18 18"><circle cx="10" cy="7" r="5" fill="#fff" stroke="#333" /><path d="M5 8H2v6M1 14h3" stroke="#333" fill="none" /><path d="M10 5v4" stroke="#333" strokeWidth="1.2" /></SmallSvg>],
    [32, <A>A</A>],
    [28, <SmallSvg $s={20} viewBox="0 0 20 20"><path d="M2 7l8-5 8 5v8l-8 4-8-4z" fill="#eee" stroke="#333" strokeWidth="1.3" /><path d="M7 18v-7h6v7" fill="#888" stroke="#333" /></SmallSvg>],
    [8, <TinyArrow />],
    [26, <SmallSvg $s={16} viewBox="0 0 16 16"><circle cx="7" cy="8" r="5" fill="#eee" stroke="#999" /><path d="M11 5l4 3-4 3z" fill="#666" /></SmallSvg>],
    [26, <SmallSvg $s={22} viewBox="0 0 22 22"><path d="M3 5h6v3H3zM3 11h5v3H3zM3 17h4v2H3z" fill="#333" /><path d="M10 6h9M10 12h9M10 18h9" stroke="#333" strokeWidth="1.3" /><path d="M16 3L6 20" stroke="#1c6ea8" strokeWidth="1.3" /></SmallSvg>, true],
    [32, <SmallSvg $s={20} viewBox="0 0 20 20"><rect x="2" y="2" width="7" height="7" fill="#ddd" stroke="#aaa" /><rect x="10" y="10" width="7" height="7" fill="#ccc" stroke="#aaa" /><path d="M11 3l6 6M17 3l-6 6" stroke="#bbb" /></SmallSvg>],
    [20, <SmallSvg $s={24} viewBox="0 0 24 24"><rect x="6" y="3" width="16" height="13" fill="#eee" stroke="#222" strokeWidth="1.4" /><rect x="2" y="9" width="13" height="12" fill="#fff" stroke="#222" strokeWidth="1.4" /><path d="M2 12h13M6 6h16" stroke="#222" /></SmallSvg>],
    [10, <TinyArrow />],
    [20, <SmallSvg $s={12} viewBox="0 0 12 12"><path d="M1 2h10" stroke="#444" strokeWidth="1.5" /><path d="M1 5h10L6 11z" fill="#444" /></SmallSvg>],
  ];

  return (
    <>
      <Global />
      <Page>
        <TitleBar>
          <Qat>
            {qat.map((q, i) => <Slot key={i} $w={q[0]} $on={q[2]}>{q[1]}</Slot>)}
          </Qat>
          <TitleText>Autodesk Revit 2021 - 项目5.rvt - 三维视图: {"{三维}"}</TitleText>
          <UserArea>
            <Slot $w={8}><SmallSvg $s={8} viewBox="0 0 8 8"><path d="M6 0v8L1 4z" fill="#444" /></SmallSvg></Slot>
            <Slot $w={26}><SmallSvg $s={18} viewBox="0 0 18 18"><path d="M3 7l1-4h3l1 4v8H2V8zM10 7l1-4h3l1 4v8H10z" fill="#fff" stroke="#333" strokeWidth="1.3" /></SmallSvg></Slot>
            <Slot $w={24}><SmallSvg $s={18} viewBox="0 0 18 18"><circle cx="9" cy="6" r="4" fill="#fff" stroke="#444" /><path d="M2 16c1-4 4-5 7-5s6 1 7 5z" fill="#fff" stroke="#444" /></SmallSvg></Slot>
            <LoginText>登录</LoginText>
            <Slot $w={12}><TinyArrow /></Slot>
            <Slot $w={30}><SmallSvg $s={18} viewBox="0 0 18 18"><path d="M1 2h3l2 9h9l1-6H5" fill="#cfe0ea" stroke="#345" /><circle cx="7" cy="14" r="1.5" fill="#345" /><circle cx="14" cy="14" r="1.5" fill="#345" /></SmallSvg></Slot>
            <Slot $w={40}><SmallSvg $s={20} viewBox="0 0 20 20"><circle cx="10" cy="10" r="8" fill="#f2f6f9" stroke="#555" strokeWidth="1.4" /><text x="10" y="14.5" fontSize="12" fontWeight="700" textAnchor="middle" fill="#2a5d88" fontFamily="Liberation Sans">?</text></SmallSvg></Slot>
            <Slot $w={10}><TinyArrow /></Slot>
          </UserArea>
        </TitleBar>
        <TabsBar>
          {tabs.map(t => <TabLabel key={t}>{t}</TabLabel>)}
          <SmallSvg $s={16} viewBox="0 0 16 16"><rect x="1" y="4" width="13" height="8" rx="2.5" fill="#eee" stroke="#333" /><path d="M5 9l2.5-3L10 9z" fill="#333" /></SmallSvg>
          <TinyArrow $c="#333" />
        </TabsBar>
        <Ribbon>
          {panels.map((p, idx) => (
            <Panel key={idx} $w={p.w} $ml={p.ml} $last={p.last}>
              <ToolRow $pl={p.pl}>
                {p.tools.map(t => (
                  <Tool key={t.i} $w={t.w} $dim={t.dim}>
                    <ToolIcon viewBox="0 0 36 36">{icons[t.i]}</ToolIcon>
                    <ToolText>{t.t}</ToolText>
                    {t.arrow && <ToolArrow />}
                    {t.side && <SideArrow />}
                  </Tool>
                ))}
              </ToolRow>
              <PanelTitle>{p.title}{p.more && <TinyArrow $c="#333" />}</PanelTitle>
            </Panel>
          ))}
        </Ribbon>
        <Band />
        <Work>
          <Props>
            <PropHead><SmallSvg $s={12} viewBox="0 0 12 12"><path d="M2 2l8 8M10 2l-8 8" stroke="#222" strokeWidth="1.8" /></SmallSvg></PropHead>
            <TypeBox>
              <TypeName>楼层平面</TypeName>
              <SmallSvg $s={9} viewBox="0 0 9 9"><path d="M1 3h7L4.5 7z" fill="#444" /></SmallSvg>
            </TypeBox>
            <ComboRow>
              <MiniCombo><Chev up={false} /></MiniCombo>
              <EditType>
                <SmallSvg $s={16} viewBox="0 0 16 16"><path d="M1 1h6v6H1zM1 9h6v6H1zM9 1h6v6H9z" fill="none" stroke="#333" /><rect x="9" y="8" width="6" height="7" fill="#e8e8e8" stroke="#333" /></SmallSvg>
                编辑类型
              </EditType>
            </ComboRow>
            <TableWrap>
              <Table>
                {propRows.map((r, i) => (
                  <Row key={i} $head={r.kind === "head"}>
                    {r.kind === "head" && <div />}
                    {r.kind === "input" && <InputVal>{r.t}</InputVal>}
                    {r.kind === "gray" && <Val $gray>{r.t}</Val>}
                    {r.kind === "text" && <Val>{r.t}</Val>}
                    {r.kind === "btn" && <Btn>{r.t}</Btn>}
                    {r.kind === "check" && <Val><Chk /></Val>}
                    {r.kind === "empty" && <Val />}
                    <Tail $head={r.kind === "head"}>{r.kind === "head" && <Dbl />}</Tail>
                  </Row>
                ))}
              </Table>
              <Scroll>
                <ScrollBtn><Chev /></ScrollBtn>
                <ScrollThumb $h={557} />
                <ScrollRest />
                <ScrollBtn><Chev up={false} /></ScrollBtn>
              </Scroll>
            </TableWrap>
            <ApplyRow><ApplyBtn>应用</ApplyBtn></ApplyRow>
          </Props>
          <Center>
            <DocStrip>
              <DocTab>
                <SmallSvg $s={15} viewBox="0 0 16 16"><path d="M2 6l6-4 6 4v7l-6 2-6-2z" fill="#eee" stroke="#333" /><path d="M6 15V9h4v6" fill="#888" stroke="#333" /></SmallSvg>
                <DocTitle>{"{三维}"}</DocTitle>
                <SmallSvg $s={12} viewBox="0 0 12 12"><path d="M2 2l8 8M10 2l-8 8" stroke="#222" strokeWidth="1.8" /></SmallSvg>
              </DocTab>
              <StripMenu><MenuBar /><SmallSvg $s={9} viewBox="0 0 9 9"><path d="M0 2h9L4.5 7z" fill="#444" /></SmallSvg></StripMenu>
            </DocStrip>
            <ViewRow>
              <Canvas>
                <Scene viewBox="125 195 1469 802"><Building /></Scene>
                <Watermark>公众号：BIM志</Watermark>
                <Cube viewBox="0 0 180 150">
                  <defs>
                    <radialGradient id="sh"><stop offset="0" stopColor="#bbb" /><stop offset="1" stopColor="#fff" stopOpacity="0" /></radialGradient>
                  </defs>
                  <ellipse cx="83" cy="95" rx="60" ry="37" fill="none" stroke="#eeeeee" strokeWidth="12" />
                  <ellipse cx="83" cy="95" rx="66" ry="43" fill="none" stroke="#c4c4c4" strokeWidth=".8" strokeDasharray="2 1" />
                  <ellipse cx="83" cy="95" rx="53" ry="31" fill="none" stroke="#c4c4c4" strokeWidth=".8" strokeDasharray="2 1" />
                  <ellipse cx="78" cy="90" rx="46" ry="30" fill="url(#sh)" />
                  <polygon points="50,42 92,29 117,55 72,70" fill="#fbfbfb" stroke="#777" />
                  <polygon points="72,70 117,55 115,90 72,107" fill="#f2f2f2" stroke="#777" />
                  <polygon points="50,42 72,70 72,107 53,80" fill="#e8e8e8" stroke="#777" />
                  <text x="86" y="58" fontSize="22" fill="#777" textAnchor="middle" transform="rotate(-6 86 50)" fontFamily="Noto Sans CJK SC">上</text>
                  <text x="93" y="93" fontSize="21" fill="#888" textAnchor="middle" transform="rotate(-12 93 85)" fontFamily="Noto Sans CJK SC">前</text>
                  <text x="61" y="82" fontSize="15" fill="#999" textAnchor="middle" fontFamily="Noto Sans CJK SC">左</text>
                  <text x="131" y="76" fontSize="17" fill="#888" textAnchor="middle" transform="rotate(40 131 70)" fontFamily="Noto Sans CJK SC">东</text>
                  <text x="28" y="113" fontSize="19" fill="#888" textAnchor="middle" transform="rotate(-20 28 108)" fontFamily="Noto Sans CJK SC">西</text>
                  <text x="113" y="137" fontSize="20" fill="#888" textAnchor="middle" transform="rotate(25 113 130)" fontFamily="Noto Sans CJK SC">南</text>
                </Cube>
                <NavBar>
                  <NavSvg viewBox="0 0 31 112">
                    <circle cx="25" cy="5" r="3.5" fill="#bbb" />
                    <circle cx="15" cy="26" r="10" fill="#f0f0f0" stroke="#999" />
                    <circle cx="15" cy="26" r="6" fill="#fff" stroke="#999" />
                    <path d="M12 46h6l-3 3z" fill="#666" />
                    <path d="M2 56h27" stroke="#bbb" />
                    <rect x="8" y="63" width="11" height="10" fill="#b7d2ae" />
                    <circle cx="20" cy="75" r="4" fill="#fff" stroke="#666" />
                    <path d="M12 88h6l-3 3z" fill="#666" />
                    <circle cx="25" cy="106" r="3.5" fill="#bbb" />
                  </NavSvg>
                </NavBar>
              </Canvas>
              <VScroll>
                <ScrollBtn><Chev /></ScrollBtn>
                <VTrack><VThumb /></VTrack>
                <ScrollBtn><Chev up={false} /></ScrollBtn>
              </VScroll>
            </ViewRow>
            <ViewBar>
              <Scale>{"1  :  100"}</Scale>
              <BarIcons>
                {Array.from({ length: 14 }).map((_, i) => <BarSlot key={i}><ThinIcon n={i} /></BarSlot>)}
                <BarSlot><Chev /></BarSlot>
              </BarIcons>
              <HThumb />
              <HRight>
                <SmallSvg $s={10} viewBox="0 0 10 10"><path d="M3 1l4 4-4 4" fill="none" stroke="#333" strokeWidth="1.5" /></SmallSvg>
                <SmallSvg $s={8} viewBox="0 0 8 8"><path d="M6 1v1M6 4v1M4 4v1M6 7v1M4 7v1M2 7v1" stroke="#999" /></SmallSvg>
              </HRight>
            </ViewBar>
          </Center>
          <Browser>
            <BrowserHead>项目浏览器 - 项目5.rvt</BrowserHead>
            {tree.map((n, i) => (
              <TreeRow key={i} $x={n.x}>
                {(n.g || []).map(x => <Guide key={x} $x={x} />)}
                {(n.half || []).map(x => <Guide key={`h${x}`} $x={x} $half />)}
                {(n.low || []).map(x => <Guide key={`l${x}`} $x={x} $low />)}
                {n.el && <Elbow $x={n.el[0]} $w={n.el[1]} />}
                {n.exp && <Expander $x={n.ex || 0}>{n.exp}</Expander>}
                {n.ic && <TreeIcon $x={n.ix || 0} viewBox="0 0 16 16">{treeIcons[n.ic]}</TreeIcon>}
                {n.edit ? <EditBox><EditSel>标高 1</EditSel></EditBox> : n.t}
              </TreeRow>
            ))}
            <MouseDot />
            <Pointer viewBox="0 0 24 34"><path d="M3 1l0 24 6-6 5 13 4-2-5-12h9z" fill="#111" stroke="#111" /></Pointer>
          </Browser>
        </Work>
        <RibbonCursor viewBox="0 0 12 20"><path d="M1 1v15l4-3 3 6 2-1-3-6h5z" fill="#fff" stroke="#222" /></RibbonCursor>
        <Status>
          <StatusSlot $w={26}><SmallSvg $s={18} viewBox="0 0 18 18"><rect x="3" y="7" width="5" height="9" rx="2" fill="#5a8fc0" stroke="#234" /><rect x="10" y="9" width="5" height="7" rx="2" fill="#fff" stroke="#234" /><circle cx="9" cy="4" r="2.5" fill="#6bb06b" stroke="#234" /></SmallSvg></StatusSlot>
          <Field $w={203}><span /><Chev up={false} /></Field>
          <StatusSlot $w={22}><SmallSvg $s={20} viewBox="0 0 20 20"><path d="M5 3h9l1 3-5 12H7l4-10H5z" fill="#a8a8a8" /></SmallSvg></StatusSlot>
          <StatusSlot $w={28}>:0</StatusSlot>
          <StatusSlot $w={40}><SmallSvg $s={16} viewBox="0 0 16 16"><rect x="1" y="1" width="14" height="14" fill="#eee" stroke="#333" /><path d="M1 4h14M3 7h2M7 7h6M3 10h2M7 10h6M3 13h2M7 13h6" stroke="#333" /></SmallSvg></StatusSlot>
          <StatusSlot $w={23}><SmallSvg $s={16} viewBox="0 0 16 16"><rect x="1" y="0" width="14" height="16" fill="#888" /><path d="M4 8h6M8 5l3 3-3 3" stroke="#ddd" fill="none" /></SmallSvg></StatusSlot>
          <Field $w={204}>主模型<Chev up={false} /></Field>
          <SelectTools>
            {selectIcons.map((ic, i) => <StatusSlot key={i} $w={i === 5 ? 25 : 26.5}><SmallSvg $s={18} viewBox="0 0 18 20">{ic}</SmallSvg></StatusSlot>)}
          </SelectTools>
        </Status>
        <Taskbar>
          <WpsIcon>W</WpsIcon>
          <Folder viewBox="0 0 26 22"><path d="M1 4h9l2 3h13v14H1z" fill="#f5c33b" /><rect x="1" y="9" width="24" height="3" fill="#3a8fd0" /><rect x="9" y="14" width="8" height="3" fill="#fbe39a" /></Folder>
          <Tray>
            <TraySlot $w={22}><SmallSvg $s={18} viewBox="0 0 18 18"><circle cx="10" cy="7" r="5" fill="none" stroke="#e0761f" strokeWidth="3" /><path d="M6 11l-4 5" stroke="#e0761f" strokeWidth="3" /></SmallSvg></TraySlot>
            <TraySlot $w={24}><SmallSvg $s={18} viewBox="0 0 18 18"><rect x="6" y="1" width="6" height="11" rx="3" fill="#d9691e" /><path d="M9 12v5M6 17h6" stroke="#d9691e" /></SmallSvg></TraySlot>
            <TraySlot $w={20}><SmallSvg $s={14} viewBox="0 0 16 16"><rect x="2" y="5" width="8" height="7" fill="#888" /><path d="M10 8l4-2v6l-4-2z" fill="#888" /></SmallSvg></TraySlot>
            <TraySlot $w={28}><SmallSvg $s={16} viewBox="0 0 16 16"><rect x="3" y="4" width="11" height="8" fill="none" stroke="#eee" /><path d="M1 3v6M4 10h8" stroke="#eee" strokeWidth="2" /></SmallSvg></TraySlot>
            <TraySlot $w={24}><SmallSvg $s={16} viewBox="0 0 16 16"><path d="M2 14A12 12 0 0 1 14 2M5 14a9 9 0 0 1 9-9M8 14a6 6 0 0 1 6-6" fill="none" stroke="#aaa" /></SmallSvg></TraySlot>
            <TraySlot $w={20}><SmallSvg $s={16} viewBox="0 0 16 16"><path d="M2 6h3l4-3v10l-4-3H2z" fill="none" stroke="#ddd" /><path d="M11 5a4 4 0 0 1 0 6" fill="none" stroke="#ddd" /></SmallSvg></TraySlot>
            <TraySlot $w={20}>英</TraySlot>
          </Tray>
        </Taskbar>
      </Page>
    </>
  );
}
